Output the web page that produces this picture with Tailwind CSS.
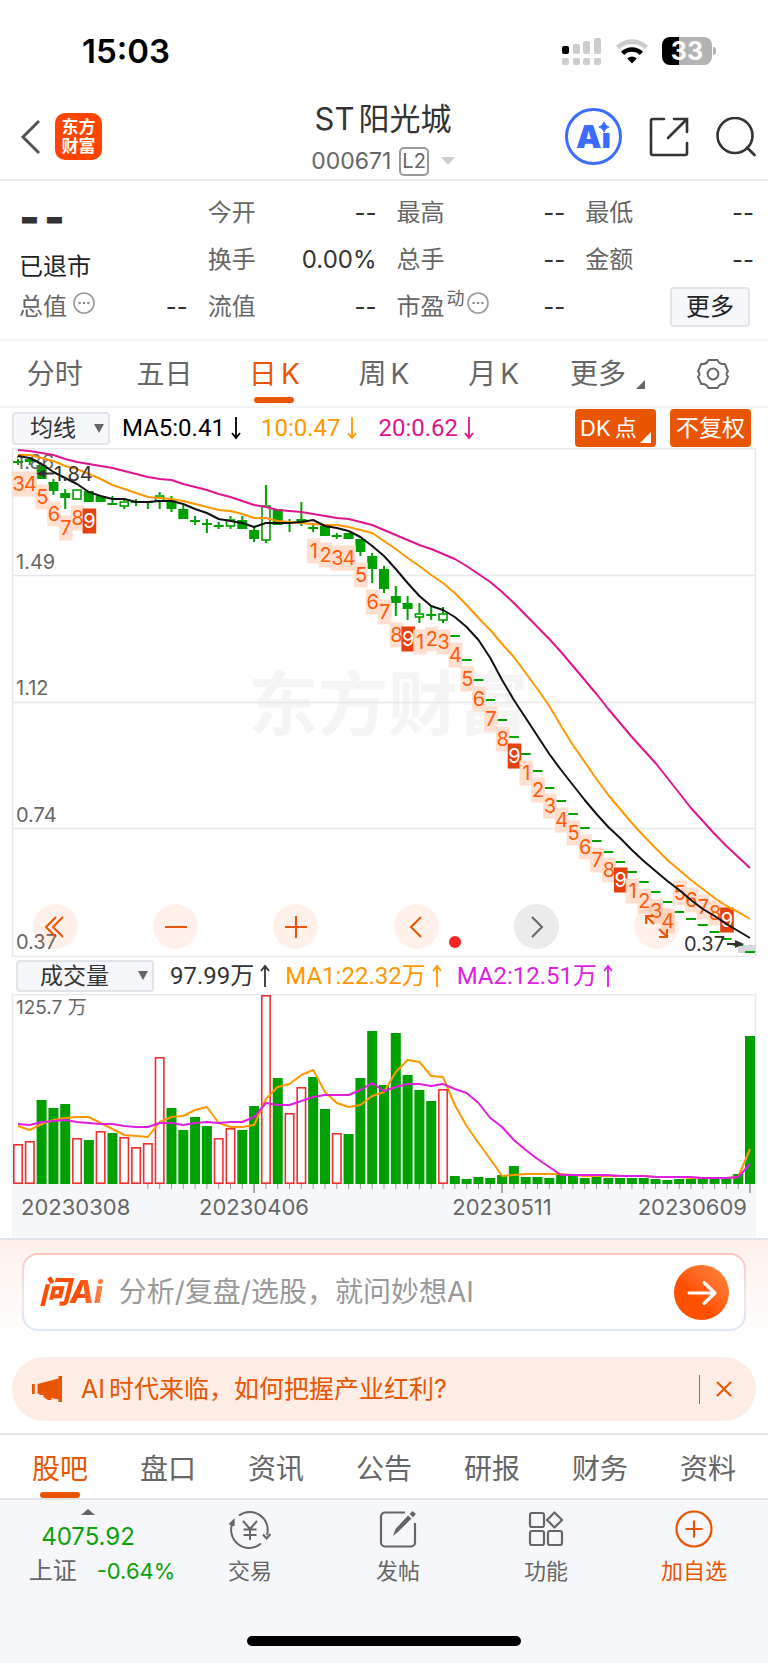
<!DOCTYPE html>
<html lang="zh-CN">
<head>
    <meta charset="UTF-8">
    <meta name="viewport" content="width=device-width, initial-scale=1.0">
    <title>ST阳光城 000671</title>
    <script src="https://cdn.jsdelivr.net/npm/@tailwindcss/browser@4"></script>
</head>
<body class="bg-white font-['Inter','Noto_Sans_CJK_SC',sans-serif] text-[#666]">
    <div class="flex min-h-screen flex-col">
        <!-- status bar -->
        <div class="flex h-[100px] items-center justify-between pt-[2px] pr-[52px] pl-[82px] text-black">
            <span class="text-[33px] leading-10 font-semibold">15:03</span>
            <div class="flex items-center gap-[14px]">
                <svg class="h-7 w-10" viewBox="0 0 40 28" fill="#ccc">
                    <rect x="0" y="9" width="7" height="8" rx="2" fill="#000"/>
                    <rect x="11" y="7" width="7" height="10" rx="2"/>
                    <rect x="21" y="4" width="7" height="13" rx="2"/>
                    <rect x="32" y="1" width="7" height="16" rx="2"/>
                    <rect x="0" y="21" width="7" height="7" rx="2"/>
                    <rect x="11" y="21" width="7" height="7" rx="2"/>
                    <rect x="21" y="21" width="7" height="7" rx="2"/>
                    <rect x="32" y="21" width="7" height="7" rx="2"/>
                </svg>
                <svg class="h-7 w-8" viewBox="0 0 32 28" fill="none" stroke-width="4.6">
                    <path d="M1.6 10.600a20.400 20.400 0 0 1 28.800 0" stroke="#ccc"/>
                    <path d="M6.600 16.400a13.300 13.300 0 0 1 18.800 0" stroke="#000"/>
                    <path d="M16 26.500l-4.800-4.900a6.800 6.800 0 0 1 9.600 0z" fill="#000"/>
                </svg>
                <div class="flex items-center gap-px">
                    <div class="flex h-7 w-[50px] items-center justify-center rounded-lg bg-linear-to-r from-black from-34% to-[#b3b3b3] to-34% text-[25px] leading-7 font-bold text-white">33</div>
                    <div class="h-2 w-[3px] rounded-r-full bg-[#b3b3b3]"></div>
                </div>
            </div>
        </div>

        <header class="grid h-[81px] grid-cols-[1fr_auto_1fr] items-center border-b-2 border-[#ebebeb]">
            <div class="flex items-center gap-[14px] pb-[10px] pl-[20px]">
                <button aria-label="返回">
                    <svg class="h-9 w-[21px]" viewBox="0 0 21 36" fill="none" stroke="#555" stroke-width="3"><path d="M19 2L3 18L19 34"/></svg>
                </button>
                <a href="#" class="flex size-[47px] flex-col items-center justify-center rounded-[10px] bg-[#ff4400] text-[17px] leading-[19px] font-bold text-white"><span>东方</span><span>财富</span></a>
            </div>
            <div class="flex flex-col items-center pr-[2px] pb-1">
                <h1 class="flex gap-1 text-[31px] leading-[38px] text-[#333]"><span>ST</span><span>阳光城</span></h1>
                <button class="flex items-center gap-2 pt-[5px] text-[23px] leading-9">
                    <span>000671</span>
                    <span class="rounded-[5px] border-2 border-[#999] px-px text-xl leading-[25px]">L2</span>
                    <svg class="ml-1 h-2 w-[14px]" viewBox="0 0 14 8"><path d="M0 0h14L7 8z" fill="#ccc"/></svg>
                </button>
            </div>
            <div class="flex items-center justify-end gap-[26px] pr-3 pb-[10px]">
                <button aria-label="Ai" class="relative flex size-[57px] items-center justify-center rounded-full border-3 border-[#3b6bff] text-[32px] leading-10 font-black text-[#3b6bff]">
                    Ai
                    <svg class="absolute top-[10px] right-[9px] size-3" viewBox="0 0 14 14"><path d="M0 0h14v14H0z" fill="#fff"/><path d="M7 1Q8.200 5.800 13 7Q8.200 8.200 7 13Q5.800 8.200 1 7Q5.800 5.800 7 1z" fill="#3b6bff" stroke="#3b6bff"/></svg>
                </button>
                <button aria-label="分享">
                    <svg class="size-[42px]" viewBox="0 0 42 42" fill="none" stroke="#333" stroke-width="2.600" stroke-linecap="round"><path d="M16 3H5a2 2 0 0 0-2 2V37a2 2 0 0 0 2 2H37a2 2 0 0 0 2-2V27M26 3H39V16M38 4L20 22"/></svg>
                </button>
                <button aria-label="搜索">
                    <svg class="size-10" viewBox="0 0 40 40" fill="none" stroke="#333" stroke-width="2.600" stroke-linecap="round"><circle cx="19" cy="18.500" r="17.500"/><path d="M31 30.500L38.500 38"/></svg>
                </button>
            </div>
        </header>

        <!-- quote -->
        <div class="grid grid-cols-4 gap-x-5 border-b-2 border-[#f3f4f6] pt-2 pr-[14px] pb-[9px] pl-[19px] text-2xl leading-[47px]">
            <div class="flex h-[47px] gap-1 text-[44px] leading-[56px] font-black text-[#333]"><span>-</span><span>-</span></div>
            <div class="flex justify-between"><span>今开</span><span class="text-[#333]">--</span></div>
            <div class="flex justify-between"><span>最高</span><span class="text-[#333]">--</span></div>
            <div class="flex justify-between"><span>最低</span><span class="text-[#333]">--</span></div>
            <div class="h-[47px] pt-[14px] leading-[33px] text-[#222]">已退市</div>
            <div class="flex justify-between"><span>换手</span><span class="text-[#333]">0.00%</span></div>
            <div class="flex justify-between"><span>总手</span><span class="text-[#333]">--</span></div>
            <div class="flex justify-between"><span>金额</span><span class="text-[#333]">--</span></div>
            <div class="flex justify-between">
                <span class="flex items-center gap-[6px]">总值
                    <svg class="mb-2 size-[22px]" viewBox="0 0 22 22"><circle cx="11" cy="11" r="10" fill="none" stroke="#999" stroke-width="1.600"/><path d="M5.500 11h2.200M9.900 11h2.200M14.300 11h2.200" stroke="#888" stroke-width="2.200"/></svg>
                </span>
                <span class="text-[#333]">--</span>
            </div>
            <div class="flex justify-between"><span>流值</span><span class="text-[#333]">--</span></div>
            <div class="flex justify-between">
                <span class="flex items-center">市盈<span class="mb-4 ml-[2px] text-lg leading-6">动</span>
                    <svg class="mb-2 ml-[2px] size-[22px]" viewBox="0 0 22 22"><circle cx="11" cy="11" r="10" fill="none" stroke="#999" stroke-width="1.600"/><path d="M5.500 11h2.200M9.900 11h2.200M14.300 11h2.200" stroke="#888" stroke-width="2.200"/></svg>
                </span>
                <span class="text-[#333]">--</span>
            </div>
            <div class="flex items-center justify-end pr-1"><button class="h-10 w-20 rounded border-2 border-[#e2e4e9] bg-[#f6f7fa] leading-9 text-[#222]">更多</button></div>
        </div>

        <!-- period tabs -->
        <nav class="grid h-[67px] grid-cols-7 border-b-2 border-[#f3f4f6] text-[28px] leading-[66px]">
            <a href="#" class="text-center">分时</a>
            <a href="#" class="text-center">五日</a>
            <a href="#" class="relative flex justify-center gap-1 text-[#ea5504]"><span>日</span><span>K</span><span class="absolute bottom-1 left-1/2 h-[6px] w-10 -translate-x-1/2 rounded-[3px] bg-[#ea5504]"></span></a>
            <a href="#" class="flex justify-center gap-1"><span>周</span><span>K</span></a>
            <a href="#" class="flex justify-center gap-1"><span>月</span><span>K</span></a>
            <a href="#" class="flex items-center justify-center gap-[10px] pl-2">更多<svg class="mt-5 size-[9px]" viewBox="0 0 9 9"><path d="M9 0V9H0z" fill="#666"/></svg></a>
            <button aria-label="设置" class="flex items-center justify-center">
                <svg class="size-8" viewBox="0 0 32 32" fill="none" stroke="#666" stroke-width="2"><path d="M11.500 2h9q1.400 3.900 5.700 4.100l1.600-.1L31 13.300Q28 16 31 18.700L27.800 26q-5.300-.8-7.300 4h-9q-2-4.800-7.300-4L1 18.700Q4 16 1 13.300L4.200 6q5.300.8 7.300-4z" stroke-linejoin="round"/><circle cx="16" cy="16" r="5.400"/></svg>
            </button>
        </nav>

        <section class="flex h-10 items-center pr-[17px] pl-3 text-2xl leading-8">
            <div class="relative">
                <select aria-label="主图指标" class="h-[33px] w-[98px] appearance-none rounded border-2 border-[#e2e4e9] bg-[#f6f7fa] pl-4 text-[23px] leading-7 text-[#333]"><option>均线</option></select>
                <svg class="pointer-events-none absolute top-3 right-[6px] h-[9px] w-[10px]" viewBox="0 0 10 9"><path d="M0 0h10L5 9z" fill="#666"/></svg>
            </div>
            <div class="flex flex-1 items-center font-['Roboto','Noto_Sans_CJK_SC',sans-serif]">
                <span class="ml-3 flex items-center gap-[6px] text-black">MA5:0.41<svg class="h-6 w-[10px]" viewBox="0 0 10 24" fill="none" stroke="currentColor" stroke-width="1.800"><path d="M5 1V22M1 17L5 22L9 17"/></svg></span>
                <span class="ml-5 flex items-center gap-[6px] text-[#ff9800]">10:0.47<svg class="h-6 w-[10px]" viewBox="0 0 10 24" fill="none" stroke="currentColor" stroke-width="1.800"><path d="M5 1V22M1 17L5 22L9 17"/></svg></span>
                <span class="ml-[22px] flex items-center gap-[6px] text-[#e0148c]">20:0.62<svg class="h-6 w-[10px]" viewBox="0 0 10 24" fill="none" stroke="currentColor" stroke-width="1.800"><path d="M5 1V22M1 17L5 22L9 17"/></svg></span>
            </div>
            <div class="flex gap-[14px] text-white">
                <button class="relative flex h-[38px] w-[81px] gap-1 rounded bg-[#ea5504] pl-[5px] text-[22px] leading-[38px]"><span>DK</span><span>点</span><svg class="absolute right-[5px] bottom-1 size-[11px]" viewBox="0 0 11 11"><path d="M11 0V11H0z" fill="#fff"/></svg></button>
                <button class="h-[38px] w-[81px] rounded bg-[#ea5504] text-[23px] leading-[38px]">不复权</button>
            </div>
        </section>

        <!-- daily K chart -->
        <section class="relative">
            <svg id="k-chart" class="block w-full" viewBox="0 0 768 509">
                <text x="248" y="282" font-size="70" font-weight="700" fill="#f5f5f6">东方财富</text>
                <path d="M12.500 0V508.500H755.500V.500H12.500M12 127.500H755M12 254.500H755M12 380.500H755" fill="none" stroke="#e5e8ed" stroke-width="1.500"/>
                <g id="k-labels" font-size="20" fill="#666">
                    <text x="16" y="21">1.86</text>
                    <text x="16" y="121">1.49</text>
                    <text x="16" y="247">1.12</text>
                    <text x="16" y="374">0.74</text>
                    <text x="16" y="501">0.37</text>
                </g>
                <rect x="738" y="497" width="18" height="8" fill="#d3d6da"/>
            </svg>
            <div class="absolute right-[89px] bottom-2 left-[33px] flex justify-between text-[#ea5504]">
                <button aria-label="最左" class="size-[45px] rounded-full bg-[#ff6a20]/10"><svg class="size-full" viewBox="0 0 45 45" fill="none" stroke="currentColor" stroke-width="2"><path d="M23 13L13 23L23 33M30 13L20 23L30 33"/></svg></button>
                <button aria-label="缩小" class="size-[45px] rounded-full bg-[#ff6a20]/10"><svg class="size-full" viewBox="0 0 45 45" fill="none" stroke="currentColor" stroke-width="2"><path d="M12 23H34"/></svg></button>
                <button aria-label="放大" class="size-[45px] rounded-full bg-[#ff6a20]/10"><svg class="size-full" viewBox="0 0 45 45" fill="none" stroke="currentColor" stroke-width="2"><path d="M12 23H34M23 12V34"/></svg></button>
                <button aria-label="左移" class="size-[45px] rounded-full bg-[#ff6a20]/10"><svg class="size-full" viewBox="0 0 45 45" fill="none" stroke="currentColor" stroke-width="2"><path d="M27 13L17 23L27 33"/></svg></button>
                <button aria-label="右移" class="size-[45px] rounded-full bg-black/8 text-[#666]"><svg class="size-full" viewBox="0 0 45 45" fill="none" stroke="currentColor" stroke-width="2"><path d="M18 13L28 23L18 33"/></svg></button>
                <button aria-label="全屏" class="size-[45px] rounded-full bg-[#ff6a20]/10"><svg class="size-full" viewBox="0 0 45 45" fill="none" stroke="currentColor" stroke-width="2"><path d="M12 20V12H20M12 12L20 20M33 25V33H25M33 33L25 25"/></svg></button>
            </div>
        </section>

        <section class="flex h-[37px] items-center pl-4 text-2xl leading-8">
            <div class="relative">
                <select aria-label="副图指标" class="h-8 w-[138px] appearance-none rounded border-2 border-[#e2e4e9] bg-[#f6f7fa] pl-[22px] text-[23px] leading-7 text-[#333]"><option>成交量</option></select>
                <svg class="pointer-events-none absolute top-[11px] right-[6px] h-[9px] w-[10px]" viewBox="0 0 10 9"><path d="M0 0h10L5 9z" fill="#666"/></svg>
            </div>
            <div class="flex items-center font-['Roboto','Noto_Sans_CJK_SC',sans-serif]">
                <span class="ml-4 flex items-center gap-[6px] text-[#333]">97.99万<svg class="h-6 w-[10px]" viewBox="0 0 10 24" fill="none" stroke="currentColor" stroke-width="1.800"><path d="M5 23V2M1 7L5 2L9 7"/></svg></span>
                <span class="ml-[15px] flex items-center gap-[6px] text-[#ff9800]">MA1:22.32万<svg class="h-6 w-[10px]" viewBox="0 0 10 24" fill="none" stroke="currentColor" stroke-width="1.800"><path d="M5 23V2M1 7L5 2L9 7"/></svg></span>
                <span class="ml-[15px] flex items-center gap-[6px] text-[#e01ee0]">MA2:12.51万<svg class="h-6 w-[10px]" viewBox="0 0 10 24" fill="none" stroke="currentColor" stroke-width="1.800"><path d="M5 23V2M1 7L5 2L9 7"/></svg></span>
            </div>
        </section>

        <!-- volume chart -->
        <section class="border-b-2 border-[#dfe3ec]">
            <svg id="vol-chart" class="block w-full" viewBox="0 0 768 244">
                <rect x="12" y="190" width="744" height="54" fill="#f6f7fa"/>
                <path d="M12.500 190V.500H755.500V190" fill="none" stroke="#e5e8ed" stroke-width="1.500"/>
                <g fill="#666">
                    <text x="16" y="20" font-size="19">125.7 万</text>
                    <text x="21" y="221" font-size="22">20230308</text>
                    <text x="254" y="221" font-size="22" text-anchor="middle">20230406</text>
                    <text x="502" y="221" font-size="22" text-anchor="middle">20230511</text>
                    <text x="747" y="221" font-size="22" text-anchor="end">20230609</text>
                </g>
            </svg>
        </section>

        <section class="bg-linear-to-b from-[#fff1ec] to-white to-90% px-[22px] pt-[13px] pb-[26px]">
            <form class="rounded-2xl bg-linear-to-b from-[#ffc4ba] via-[#f3e4ea] to-[#dbe6f8] p-[2px]">
                <div class="flex h-[74px] items-center rounded-[14px] bg-white px-[15px]">
                    <span class="bg-linear-to-r from-[#ff4d00] from-60% to-[#ff8a50] bg-clip-text pr-1 text-[31px] leading-10 font-extrabold text-transparent italic">问Ai</span>
                    <input type="text" aria-label="问Ai" placeholder="分析/复盘/选股，就问妙想AI" class="ml-3 min-w-0 flex-1 text-[28px] leading-10 outline-none placeholder:text-[#999]">
                    <button aria-label="发送" class="size-[55px] rounded-full bg-linear-to-tr from-[#ff5000] from-40% to-[#ff8a3c]">
                        <svg class="size-full" viewBox="0 0 55 55" fill="none" stroke="#fff" stroke-width="3.200" stroke-linecap="round" stroke-linejoin="round"><path d="M15 28H41M30 17.500L41 28L30 38.500"/></svg>
                    </button>
                </div>
            </form>
        </section>

        <section class="mx-3 flex h-16 items-center rounded-full bg-[#fdede4] pr-6 pl-5 text-[25px] leading-9 text-[#ea5504]">
            <svg class="h-[26px] w-[31px]" viewBox="0 0 31 26" fill="currentColor"><path d="M0 8h2.800v10H0zM5.500 8L26.500 2.500V0H30V26H26.500V23.500L19.500 22V24H16L11.500 21V19H8L5.500 17z"/></svg>
            <p class="ml-[18px] flex flex-1 gap-1"><span>AI</span><span>时代来临，如何把握产业红利?</span></p>
            <span class="mr-4 h-[29px] w-px bg-[#ea5504]"></span>
            <button aria-label="关闭"><svg class="size-4" viewBox="0 0 16 16" fill="none" stroke="currentColor" stroke-width="2"><path d="M1 1L15 15M15 1L1 15"/></svg></button>
        </section>

        <nav class="mt-3 grid grid-cols-7 border-y-2 border-[#e4e4e4] px-[6px] pt-[5px] text-[28px] leading-[58px]">
            <a href="#" class="relative text-center text-[#ea5504]">股吧<span class="absolute bottom-0 left-1/2 h-[6px] w-10 -translate-x-1/2 rounded-[3px] bg-[#ea5504]"></span></a>
            <a href="#" class="text-center">盘口</a>
            <a href="#" class="text-center">资讯</a>
            <a href="#" class="text-center">公告</a>
            <a href="#" class="text-center">研报</a>
            <a href="#" class="text-center">财务</a>
            <a href="#" class="text-center">资料</a>
        </nav>

        <footer class="relative grid flex-1 grid-cols-[176fr_148fr_148fr_148fr_148fr] items-start bg-[#f6f7fa] pt-[9px] pb-[68px] text-[22px] leading-8">
            <a href="#" class="flex flex-col items-center">
                <svg class="h-[6px] w-[14px]" viewBox="0 0 14 6"><path d="M0 6L7 0L14 6z" fill="#666"/></svg>
                <span class="mt-1 text-2xl leading-9 text-[#0aa10a]">4075.92</span>
                <span class="flex items-center gap-5 pl-7"><span class="text-2xl leading-8">上证</span><span class="text-[#0aa10a]">-0.64%</span></span>
            </a>
            <a href="#" class="flex flex-col items-center gap-[6px]">
                <svg class="h-10 w-[42px]" viewBox="0 0 42 40" fill="none" stroke="#666" stroke-width="2"><path d="M10 6.500A18 18 0 0 1 38 26M34 25.500L37.600 29.500L41.500 25M32 34.500A18 18 0 0 1 4 13M.500 15.500L4.600 11.500V17M14 12L21 20L28 12M21 20V31M14.500 20.500H27.500M14.500 26H27.500"/></svg>
                <span>交易</span>
            </a>
            <a href="#" class="flex flex-col items-center gap-[6px]">
                <svg class="size-10" viewBox="0 0 40 40" fill="none" stroke="#666" stroke-width="2.200"><path d="M27 3.500H7A4 4 0 0 0 3 7.500V33.500A4 4 0 0 0 7 37.500H33A4 4 0 0 0 37 33.500V14"/><path d="M15 27L17.500 20L30 6.500L33.500 9.500L20 23zM31.500 5L34.500 2L38 5L35 8.200z" fill="#666" stroke="none"/></svg>
                <span>发帖</span>
            </a>
            <a href="#" class="flex flex-col items-center gap-[6px]">
                <svg class="size-10" viewBox="0 0 40 40" fill="none" stroke="#666" stroke-width="2.200"><rect x="4" y="4" width="14" height="14" rx="2"/><rect x="4" y="22" width="14" height="14" rx="2"/><rect x="22" y="22" width="14" height="14" rx="2"/><path d="M28.500 3.500L36 11L28.500 18.500L21 11z" stroke-linejoin="round"/></svg>
                <span>功能</span>
            </a>
            <a href="#" class="flex flex-col items-center gap-[6px] text-[#ea5504]">
                <svg class="size-10" viewBox="0 0 40 40" fill="none" stroke="currentColor" stroke-width="2.200"><circle cx="20" cy="20" r="17.500"/><path d="M11.500 20H28.500M20 11.500V28.500"/></svg>
                <span>加自选</span>
            </a>
            <div class="absolute bottom-[17px] left-1/2 h-[10px] w-[274px] -translate-x-1/2 rounded-full bg-black"></div>
        </footer>
    </div>

    <script>
        const GREEN = "#00a000";
        const RED = "#f03030";
        const NS = "http://www.w3.org/2000/svg";
        const cx = i => 18 + i * 732 / 62;

        const add = (parent, tag, attrs, text) => {
            const el = document.createElementNS(NS, tag);
            Object.entries(attrs).forEach(([k, v]) => el.setAttribute(k, v));
            if (text !== undefined) el.textContent = text;
            parent.appendChild(el);
            return el;
        };

        const line = (parent, ys, stroke) => add(parent, "polyline", {
            points: ys.map((y, i) => `${cx(i).toFixed(1)},${y}`).join(" "),
            fill: "none", stroke, "stroke-width": 2, "stroke-linejoin": "round"
        });

        // candles: [body top, body bottom, wick top, wick bottom, hollow]
        const candles = [
            [13, 15, 11, 17], [11, 14, 11, 17], [17, 31, 17, 31], [34, 43, 31, 47], [45, 50, 41, 61],
            [41, 51, 41, 51, 1], [43, 54, 43, 54], [48, 54, 48, 54], [55, 57, 48, 57], [53, 58, 52, 61, 1],
            [53, 55, 51, 58], [54, 55, 53, 61], [47, 53, 44, 61, 1], [52, 61, 48, 64], [61, 71, 57, 71],
            [72, 74, 68, 77], [75, 77, 71, 85], [77, 79, 74, 81], [71, 78, 68, 81, 1], [72, 81, 68, 81],
            [82, 91, 79, 94], [57, 92, 37, 95, 1], [61, 77, 61, 77], [74, 75, 71, 84], [71, 74, 54, 78],
            [79, 81, 76, 84], [78, 88, 78, 88], [87, 89, 85, 91], [85, 91, 85, 91], [91, 104, 91, 108],
            [108, 121, 105, 135], [121, 141, 118, 145], [148, 155, 138, 168], [155, 161, 148, 172], [165, 169, 155, 175, 1],
            [166, 168, 158, 172], [165, 172, 159, 175, 1]
        ];
        // one-price limit-down days
        const dashes = [188, 212, 232, 252, 272, 289, 306, 323, 340, 353, 366, 380, 393, 404, 414, 424, 434, 444, 454, 464, 471, 477, 484, 491, 497, 504];

        const ma5 = [8, 10, 16, 24, 30, 36, 44, 48, 51, 51, 54, 54, 53, 53, 56, 61, 65, 71, 73, 75, 79, 75, 75, 75, 74, 72, 78, 80, 83, 89, 98, 108, 121, 135, 148, 158, 162, 169, 179, 192, 210, 232, 252, 270, 288, 306, 322, 337, 352, 366, 379, 390, 402, 413, 423, 433, 442, 452, 461, 468, 476, 483, 490];
        const ma10 = [7, 7, 10, 13, 18, 21, 26, 31, 37, 41, 45, 49, 50, 51, 53, 56, 59, 62, 63, 66, 70, 70, 73, 74, 75, 76, 77, 77, 79, 82, 85, 93, 101, 110, 118, 127, 135, 145, 157, 170, 182, 196, 209, 225, 241, 258, 278, 297, 314, 331, 347, 361, 375, 388, 400, 412, 422, 432, 441, 450, 458, 464, 471];
        const ma20 = [2, 3, 5, 7, 11, 14, 16, 18, 20, 23, 26, 29, 31, 32, 36, 39, 42, 46, 49, 53, 57, 59, 62, 63, 64, 66, 68, 70, 71, 74, 77, 82, 87, 92, 97, 101, 106, 111, 118, 126, 134, 144, 155, 167, 179, 191, 204, 218, 232, 246, 261, 275, 289, 302, 315, 330, 345, 360, 373, 386, 398, 409, 420];

        // sequence marks: [bar index, digit, center y]
        const marks = [
            [0, 3, 36], [1, 4, 36], [2, 5, 49], [3, 6, 66], [4, 7, 80], [5, 8, 70], [6, 9, 73],
            [25, 1, 103], [26, 2, 107], [27, 3, 110], [28, 4, 110], [29, 5, 127], [30, 6, 154], [31, 7, 164], [32, 8, 187], [33, 9, 191],
            [34, 1, 194], [35, 2, 191], [36, 3, 194], [37, 4, 207], [38, 5, 231], [39, 6, 251], [40, 7, 271], [41, 8, 291], [42, 9, 308],
            [43, 1, 325], [44, 2, 342], [45, 3, 358], [46, 4, 372], [47, 5, 385], [48, 6, 399], [49, 7, 412], [50, 8, 422], [51, 9, 432],
            [52, 1, 443], [53, 2, 453], [54, 3, 463], [55, 4, 473], [56, 5, 445], [57, 6, 452], [58, 7, 459], [59, 8, 465], [60, 9, 472]
        ];

        const k = document.getElementById("k-chart");
        const labels = document.getElementById("k-labels");
        candles.forEach(([top, bottom, high, low, hollow], i) => {
            const x = cx(i);
            if (hollow) {
                add(k, "path", { d: `M${x} ${high}V${top}M${x} ${bottom}V${low}`, stroke: GREEN, "stroke-width": 2 });
                add(k, "rect", { x: x - 4, y: top + 1, width: 8, height: bottom - top - 1, fill: "none", stroke: GREEN, "stroke-width": 1.6 });
            } else {
                add(k, "path", { d: `M${x} ${high}V${low}`, stroke: GREEN, "stroke-width": 2 });
                add(k, "rect", { x: x - 5, y: top, width: 10, height: bottom - top, fill: GREEN });
            }
        });
        dashes.forEach((y, i) => add(k, "rect", { x: cx(37 + i) - 5, y: y - 1, width: 10, height: 2, fill: GREEN }));
        k.appendChild(labels);
        marks.forEach(([i, n, y]) => {
            const x = cx(i) + 0.6;
            const nine = n === 9;
            add(k, "rect", { x: x - 6.8, y: y - 12.5, width: 13.6, height: 25, fill: nine ? "#e2420f" : "#ffdccb", "fill-opacity": nine ? 1 : 0.9 });
            add(k, "text", { x, y: y + 7, "font-size": 20, "text-anchor": "middle", fill: nine ? "#fff" : "#ff5a0a" }, n);
        });
        line(k, ma20, "#e0148c");
        line(k, ma10, "#ff9800");
        line(k, ma5, "#111");
        add(k, "path", { d: "M44 25.500H54", stroke: "#333", "stroke-width": 2 });
        add(k, "path", { d: "M36 25.500L45 21.500V29.500z", fill: "#333" });
        add(k, "text", { x: 54, y: 33, "font-size": 20, fill: "#333" }, "1.84");
        add(k, "text", { x: 684, y: 503, "font-size": 20, fill: "#333" }, "0.37");
        add(k, "path", { d: "M727 496H736", stroke: "#333", "stroke-width": 2 });
        add(k, "path", { d: "M744 496L735 492V500z", fill: "#333" });
        add(k, "circle", { cx: 455, cy: 494, r: 6, fill: "#f52222" });

        // volume bar heights, in px above the axis
        const vols = [40, 43, 84, 76, 80, 46, 44, 53, 51, 47, 37, 41, 127, 76, 54, 67, 58, 46, 56, 54, 78, 189, 106, 71, 97, 107, 75, 51, 50, 106, 153, 99, 151, 109, 94, 83, 95, 8, 5, 7, 6, 9, 18, 7, 7, 6, 9, 10, 6, 7, 6, 6, 6, 6, 5, 4, 5, 5, 5, 5, 6, 10, 148];
        const up = [0, 1, 5, 7, 9, 10, 11, 12, 17, 18, 21, 23, 24, 27, 36];
        const vma5 = [132, 136, 130, 126, 124, 123, 123, 129, 135, 141, 142, 143, 128, 123, 122, 116, 113, 129, 133, 133, 131, 105, 93, 90, 81, 76, 98, 109, 113, 111, 102, 98, 78, 66, 68, 82, 83, 111, 132, 149, 165, 182, 181, 180, 180, 180, 180, 181, 182, 182, 182, 182, 182, 182, 183, 183, 183, 184, 184, 184, 184, 183, 155];
        const vma10 = [130, 131, 128, 127, 126, 128, 129, 130, 130, 132, 133, 133, 129, 129, 131, 129, 128, 129, 128, 128, 123, 109, 111, 111, 107, 103, 101, 101, 101, 96, 89, 97, 93, 90, 90, 92, 90, 95, 99, 109, 124, 133, 146, 156, 165, 173, 181, 181, 181, 181, 181, 182, 182, 182, 183, 183, 183, 183, 184, 184, 184, 183, 170];

        const v = document.getElementById("vol-chart");
        vols.forEach((h, i) => {
            const x = cx(i);
            if (up.includes(i)) {
                add(v, "rect", { x: x - 4.2, y: 190 - h + 0.8, width: 8.4, height: h - 1.6, fill: "#fff", stroke: RED, "stroke-width": 1.6 });
            } else {
                add(v, "rect", { x: x - 5, y: 190 - h, width: 10, height: h, fill: GREEN });
            }
            if (i > 10) {
                const major = i === 20 || i === 41 || i === 62;
                add(v, "path", { d: `M${x} 190V${major ? 199 : 195}`, stroke: "#999", "stroke-width": major ? 1.6 : 1 });
            }
        });
        line(v, vma5, "#ff9800");
        line(v, vma10, "#e01ee0");
    </script>
</body>
</html>
